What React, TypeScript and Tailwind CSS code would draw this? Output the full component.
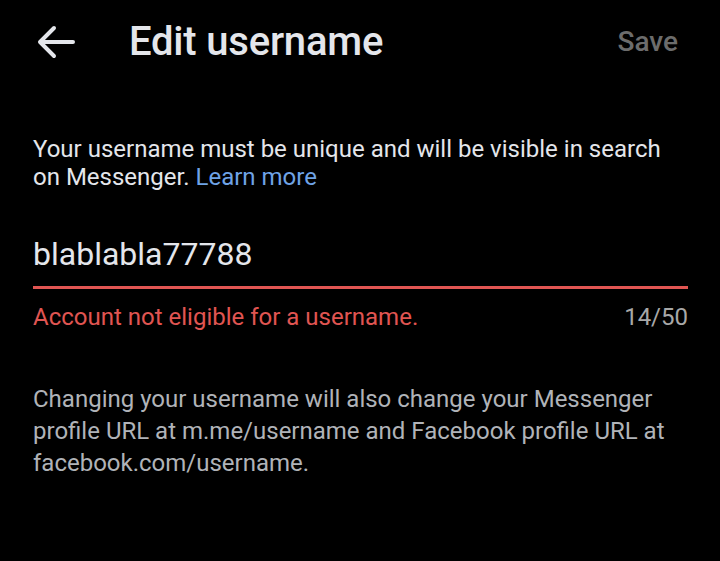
import React from "react";

export default function App() {
  return (
    <div
      className="w-[720px] h-[561px] bg-black text-[#e4e6eb] overflow-hidden"
      style={{ fontFamily: "Roboto, 'Liberation Sans', sans-serif" }}
    >
      <div className="flex items-center h-[84px] pl-[36px] pr-[42px]">
        <svg width="40" height="34" viewBox="0 0 40 34" className="shrink-0">
          <path
            d="M37 17H5M18 3L4 17l14 14"
            fill="none"
            stroke="#e4e6eb"
            strokeWidth="4"
            strokeLinecap="round"
            strokeLinejoin="round"
          />
        </svg>
        <div className="ml-[53px] text-[40px] font-medium tracking-[-0.2px] leading-none">
          Edit username
        </div>
        <div className="ml-auto text-[28px] font-medium text-[#6c6c6c] leading-none">
          Save
        </div>
      </div>
      <div className="pl-[33px] pr-[32px] pt-[51px]">
        <p className="text-[24px] leading-[28px]">
          Your username must be unique and will be visible in search
          <br />
          on Messenger. <span className="text-[#6fa3e6]">Learn more</span>
        </p>
        <div className="mt-[43px] text-[32px] leading-[40px]">blablabla77788</div>
        <div className="mt-[12px] h-[3px] bg-[#e05552]" />
        <div className="flex justify-between mt-[14px] text-[24px] leading-[28px]">
          <span className="text-[#e05552]">Account not eligible for a username.</span>
          <span className="text-[#a8a8a8]">14/50</span>
        </div>
        <p className="mt-[52px] text-[24px] leading-[32px] text-[#b0b3b8] pr-[20px]">
          Changing your username will also change your Messenger profile URL
          at m.me/username and Facebook profile URL at facebook.com/username.
        </p>
      </div>
    </div>
  );
}
